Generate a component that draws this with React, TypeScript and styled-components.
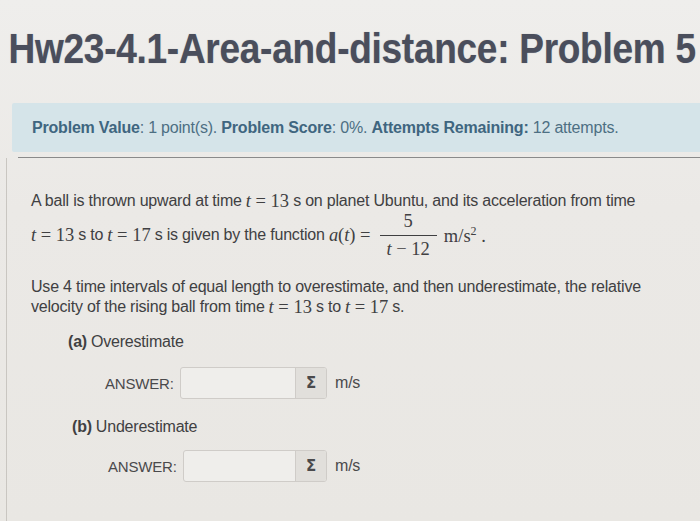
import React from "react";
import styled, { createGlobalStyle } from "styled-components";

const Global = createGlobalStyle`
  html, body { margin: 0; padding: 0; }
  body {
    width: 700px;
    height: 521px;
    overflow: hidden;
    background: #ebe9e6;
    font-family: "Liberation Sans", Arial, sans-serif;
    color: #3f3f41;
  }
`;

const Page = styled.div`
  width: 700px;
  height: 521px;
  overflow: hidden;
  display: flex;
  flex-direction: column;
  background: linear-gradient(180deg, #efeeec 0%, #ebe9e6 40%, #e9e7e3 100%);
`;

const Title = styled.h1`
  margin: 0;
  padding: 23px 0 0 10px;
  height: 51px;
  font-size: 43px;
  line-height: 50px;
  font-weight: 700;
  letter-spacing: -0.3px;
  color: #4a4e5c;
  white-space: nowrap;
  transform: scaleX(0.86);
  transform-origin: left center;
  text-shadow: 0 0 1px rgba(60, 60, 80, 0.4);
`;

const InfoBar = styled.div`
  margin: 29px 0 0 12px;
  height: 49px;
  display: flex;
  align-items: center;
  padding-left: 20px;
  background: #d5e4e9;
  border-radius: 2px 0 0 2px;
  font-size: 16px;
  color: #4d6f83;
  white-space: nowrap;
  letter-spacing: -0.2px;
`;

const Label = styled.b`
  font-weight: 700;
  color: #3f6680;
`;

const Rule = styled.div`
  margin: 5px 0 0 18px;
  height: 1px;
  background: #8a8a8a;
`;

const Body = styled.div`
  flex: 1;
  margin-left: 6px;
  padding: 33px 0 0 24px;
  border-left: 1px solid #c9c6c1;
  font-size: 16px;
  letter-spacing: -0.2px;
  color: #404042;
`;

const Line = styled.div<{ $h?: number }>`
  height: ${(p) => p.$h ?? 20}px;
  display: flex;
  align-items: center;
  white-space: nowrap;
`;

const M = styled.span`
  font-family: "Liberation Serif", "Times New Roman", serif;
  font-size: 18.5px;
  letter-spacing: 0;
  margin: 0 4px;
`;

const I = styled.i`
  font-family: "Liberation Serif", "Times New Roman", serif;
  font-size: 18.5px;
  font-style: italic;
`;

const Frac = styled.span`
  display: inline-flex;
  flex-direction: column;
  align-items: center;
  margin: 0 7px 0 9px;
  font-family: "Liberation Serif", "Times New Roman", serif;
  font-size: 18.5px;
  letter-spacing: 0;
`;

const Num = styled.span`
  padding: 0 7px 4px;
  line-height: 20px;
`;

const Den = styled.span`
  padding: 3px 7px 0;
  line-height: 20px;
  border-top: 1px solid #3f3f41;
`;

const Unit = styled.span`
  font-family: "Liberation Serif", "Times New Roman", serif;
  font-size: 18.5px;
  letter-spacing: 0;
  sup {
    font-size: 12px;
    vertical-align: 7px;
  }
`;

const Gap = styled.div<{ $h: number }>`
  height: ${(p) => p.$h}px;
`;

const Part = styled.div<{ $indent: number }>`
  padding-left: ${(p) => p.$indent}px;
  height: 22px;
  display: flex;
  align-items: center;
  color: #404042;
  b { font-weight: 700; margin-right: 4px; }
`;

const AnswerRow = styled.div<{ $indent: number }>`
  padding-left: ${(p) => p.$indent}px;
  display: flex;
  align-items: center;
  height: 32px;
`;

const AnsLabel = styled.span<{ $w: number }>`
  width: ${(p) => p.$w}px;
  font-size: 15px;
  color: #4a4a4c;
`;

const InputGroup = styled.div<{ $w: number }>`
  display: flex;
  width: ${(p) => p.$w}px;
  height: 30px;
  border: 1px solid #cfccc8;
  border-radius: 3px;
  overflow: hidden;
  background: #efeeeb;
`;

const Field = styled.div`
  flex: 1;
`;

const Sigma = styled.div`
  width: 30px;
  display: flex;
  align-items: center;
  justify-content: center;
  border-left: 1px solid #cfccc8;
  background: #e1dfdb;
  font-family: "DejaVu Sans", sans-serif;
  font-weight: 700;
  font-size: 15px;
  color: #4a4a4c;
`;

const UnitText = styled.span`
  margin-left: 8px;
  color: #4a4a4c;
`;

export default function App() {
  return (
    <>
      <Global />
      <Page>
        <Title>Hw23-4.1-Area-and-distance: Problem 5</Title>
        <InfoBar>
          <Label>Problem Value</Label>: 1 point(s).&nbsp;<Label>Problem Score</Label>: 0%.&nbsp;
          <Label>Attempts Remaining:</Label>&nbsp;12 attempts.
        </InfoBar>
        <Rule />
        <Body>
          <Line $h={20}>
            A ball is thrown upward at time <M><I>t</I> = 13</M> s on planet Ubuntu, and its acceleration from time
          </Line>
          <Line $h={48}>
            <M style={{ marginLeft: 0 }}><I>t</I> = 13</M> s to <M><I>t</I> = 17</M> s is given by the function&nbsp;
            <I>a</I><M style={{ margin: 0 }}>(<I>t</I>) =</M>
            <Frac>
              <Num>5</Num>
              <Den><I>t</I> − 12</Den>
            </Frac>
            <Unit>m/s<sup>2</sup> .</Unit>
          </Line>
          <Gap $h={18} />
          <Line $h={20}>
            Use 4 time intervals of equal length to overestimate, and then underestimate, the relative
          </Line>
          <Line $h={20}>
            velocity of the rising ball from time <M><I>t</I> = 13</M> s to <M><I>t</I> = 17</M> s.
          </Line>
          <Gap $h={14} />
          <Part $indent={37}><b>(a)</b> Overestimate</Part>
          <Gap $h={14} />
          <AnswerRow $indent={74}>
            <AnsLabel $w={75}>ANSWER:</AnsLabel>
            <InputGroup $w={145}>
              <Field />
              <Sigma>Σ</Sigma>
            </InputGroup>
            <UnitText>m/s</UnitText>
          </AnswerRow>
          <Gap $h={17} />
          <Part $indent={41}><b>(b)</b> Underestimate</Part>
          <Gap $h={12} />
          <AnswerRow $indent={77}>
            <AnsLabel $w={75}>ANSWER:</AnsLabel>
            <InputGroup $w={142}>
              <Field />
              <Sigma>Σ</Sigma>
            </InputGroup>
            <UnitText>m/s</UnitText>
          </AnswerRow>
        </Body>
      </Page>
    </>
  );
}
